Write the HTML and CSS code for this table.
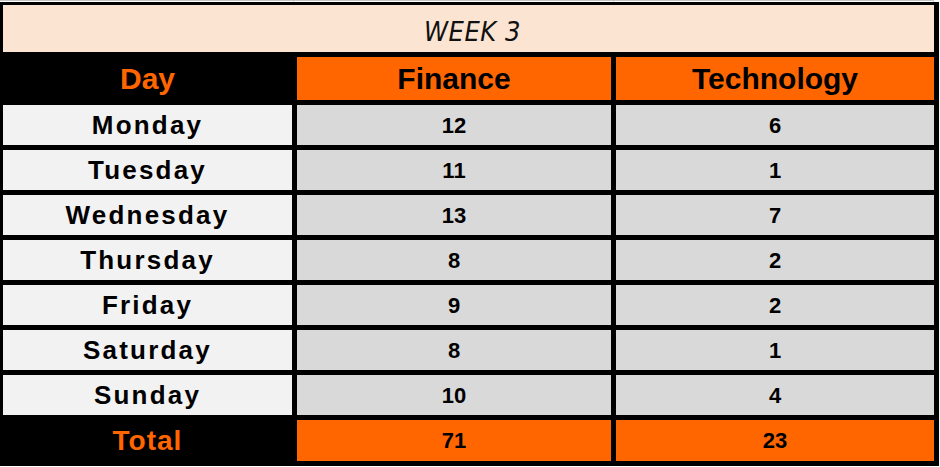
FILE: index.html
```html
<!DOCTYPE html>
<html>
<head>
<meta charset="utf-8">
<link rel="stylesheet" href="styles.css">
</head>
<body>
<div class="gridline">
  <span class="gl gl-a"></span><span class="gl gl-b"></span><span class="gl gl-c"></span>
</div>
<div class="sheet">
  <div class="title">WEEK 3</div>
  <div class="hd hd-day">Day</div>
  <div class="hd">Finance</div>
  <div class="hd">Technology</div>

  <div class="day">Monday</div><div class="num">12</div><div class="num">6</div>
  <div class="day">Tuesday</div><div class="num">11</div><div class="num">1</div>
  <div class="day">Wednesday</div><div class="num">13</div><div class="num">7</div>
  <div class="day">Thursday</div><div class="num">8</div><div class="num">2</div>
  <div class="day">Friday</div><div class="num">9</div><div class="num">2</div>
  <div class="day">Saturday</div><div class="num">8</div><div class="num">1</div>
  <div class="day">Sunday</div><div class="num">10</div><div class="num">4</div>

  <div class="tot tot-label">Total</div>
  <div class="tot">71</div>
  <div class="tot">23</div>
</div>
</body>
</html>
```

FILE: styles.css
```css
html, body {
  margin: 0;
  padding: 0;
  background: #ffffff;
}

body {
  width: 940px;
  height: 467px;
  overflow: hidden;
  font-family: "Liberation Sans", Arial, sans-serif;
}

.gridline {
  display: flex;
  height: 2px;
  border-top: 1px solid #c4c4c4;
  box-sizing: border-box;
  width: 934px;
}

.gl {
  display: block;
  height: 1px;
  border-right: 1px solid #d4d4d4;
  box-sizing: border-box;
}
.gl-a { width: 294px; }
.gl-b { width: 320px; }
.gl-c { width: 320px; }

.sheet {
  display: grid;
  grid-template-columns: 289px 314px 318px;
  grid-template-rows: 47px 43px repeat(7, 40px) 41px;
  gap: 5px;
  background: #000000;
  padding: 3px 5px 5px 3px;
  width: 939px;
  box-sizing: border-box;
}

.title {
  grid-column: 1 / 4;
  background: #fce4d2;
  display: flex;
  align-items: center;
  justify-content: center;
  padding-top: 5px;
  padding-left: 8px;
  box-sizing: border-box;
  font-family: "DejaVu Sans", sans-serif;
  font-stretch: condensed;
  font-style: italic;
  font-weight: 300;
  font-size: 27px;
  letter-spacing: 0.5px;
  color: #111111;
}

.hd {
  background: #ff6600;
  color: #000000;
  font-weight: bold;
  font-size: 30px;
  display: flex;
  align-items: center;
  justify-content: center;
}

.hd-day {
  background: #000000;
  color: #ff6600;
}

.day {
  background: #f2f2f2;
  color: #000000;
  font-weight: bold;
  font-size: 26px;
  letter-spacing: 2.2px;
  display: flex;
  align-items: center;
  justify-content: center;
}

.num {
  background: #d9d9d9;
  color: #000000;
  font-weight: bold;
  font-size: 22px;
  display: flex;
  align-items: center;
  justify-content: center;
  padding-top: 2px;
  box-sizing: border-box;
}

.tot {
  background: #ff6600;
  color: #000000;
  font-weight: bold;
  font-size: 22px;
  display: flex;
  align-items: center;
  justify-content: center;
}

.tot-label {
  background: #000000;
  color: #ff6600;
  font-size: 28px;
  letter-spacing: 1px;
}
```
